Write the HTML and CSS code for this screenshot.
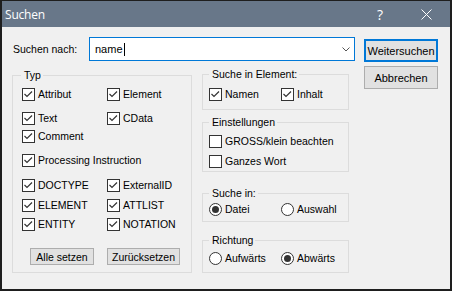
FILE: index.html
```html
<!DOCTYPE html>
<html lang="de">
<head>
    <meta charset="utf-8" />
    <meta name="viewport" content="width=device-width, initial-scale=1" />
    <title>Suchen</title>
    <link rel="stylesheet" href="styles.css">
</head>
<body>
    <svg class="defs" width="0" height="0">
        <symbol id="tick" viewBox="0 0 11 11">
            <path d="M1.5 5 L4 7.5 L9 2.5" fill="none" stroke="#333" stroke-width="1.2" />
        </symbol>
    </svg>
    <div class="window">
        <div class="titlebar">
            <span class="title">Suchen</span>
            <span class="title-btn help">?</span>
            <span class="title-btn close">
                <svg width="11" height="11" viewBox="0 0 11 11">
                    <path d="M0.5 0.5 L10.5 10.5 M10.5 0.5 L0.5 10.5" stroke="#fff" stroke-width="1" />
                </svg>
            </span>
        </div>
        <div class="content">
            <div class="form">
                <div class="search-row">
                    <label class="search-label">Suchen nach:</label>
                    <div class="combo">
                        <span class="combo-text">name</span><span class="caret"></span>
                        <svg class="chevron" width="8" height="5" viewBox="0 0 8 5">
                            <path d="M0.5 0.5 L4 4 L7.5 0.5" fill="none" stroke="#555" stroke-width="1" />
                        </svg>
                    </div>
                </div>
                <div class="groups">
                    <fieldset class="group group-typ">
                        <legend>Typ</legend>
                        <div class="typ-grid">
                            <label class="check"><span class="box"><svg><use href="#tick" /></svg></span>Attribut</label>
                            <label class="check"><span class="box"><svg><use href="#tick" /></svg></span>Element</label>
                            <label class="check"><span class="box"><svg><use href="#tick" /></svg></span>Text</label>
                            <label class="check"><span class="box"><svg><use href="#tick" /></svg></span>CData</label>
                            <label class="check"><span class="box"><svg><use href="#tick" /></svg></span>Comment</label>
                            <span></span>
                            <label class="check wide"><span class="box"><svg><use href="#tick" /></svg></span>Processing Instruction</label>
                            <label class="check"><span class="box"><svg><use href="#tick" /></svg></span>DOCTYPE</label>
                            <label class="check"><span class="box"><svg><use href="#tick" /></svg></span>ExternalID</label>
                            <label class="check"><span class="box"><svg><use href="#tick" /></svg></span>ELEMENT</label>
                            <label class="check"><span class="box"><svg><use href="#tick" /></svg></span>ATTLIST</label>
                            <label class="check"><span class="box"><svg><use href="#tick" /></svg></span>ENTITY</label>
                            <label class="check"><span class="box"><svg><use href="#tick" /></svg></span>NOTATION</label>
                        </div>
                        <div class="typ-buttons">
                            <button class="btn btn-small btn-all">Alle setzen</button>
                            <button class="btn btn-small btn-reset">Zurücksetzen</button>
                        </div>
                    </fieldset>
                    <div class="right-col">
                        <fieldset class="group group-element">
                            <legend>Suche in Element:</legend>
                            <div class="pair">
                                <label class="check"><span class="box"><svg><use href="#tick" /></svg></span>Namen</label>
                                <label class="check"><span class="box"><svg><use href="#tick" /></svg></span>Inhalt</label>
                            </div>
                        </fieldset>
                        <fieldset class="group group-settings">
                            <legend>Einstellungen</legend>
                            <div class="stack">
                                <label class="check"><span class="box"></span>GROSS/klein beachten</label>
                                <label class="check"><span class="box"></span>Ganzes Wort</label>
                            </div>
                        </fieldset>
                        <fieldset class="group group-scope">
                            <legend>Suche in:</legend>
                            <div class="pair">
                                <label class="check"><span class="radio on"></span>Datei</label>
                                <label class="check"><span class="radio"></span>Auswahl</label>
                            </div>
                        </fieldset>
                        <fieldset class="group group-direction">
                            <legend>Richtung</legend>
                            <div class="pair">
                                <label class="check"><span class="radio"></span>Aufwärts</label>
                                <label class="check"><span class="radio on"></span>Abwärts</label>
                            </div>
                        </fieldset>
                    </div>
                </div>
            </div>
            <div class="buttons">
                <button class="btn btn-default">Weitersuchen</button>
                <button class="btn">Abbrechen</button>
            </div>
        </div>
    </div>
</body>
</html>
```

FILE: styles.css
```css
body {
    margin: 0;
    padding: 0;
    font-family: "Liberation Sans", Arial, sans-serif;
    font-size: 10.5px;
    color: #000;
    background-color: #f0f0f0;
}
.defs {
    position: absolute;
}
.window {
    width: 452px;
    height: 291px;
    box-sizing: border-box;
    border: 2px solid #1e1e1e;
    border-top-width: 1px;
    background-color: #f0f0f0;
}
.titlebar {
    display: flex;
    align-items: center;
    height: 26px;
    background-color: #687789;
    color: #fff;
    font-family: "Open Sans", "Noto Sans", sans-serif;
    font-size: 12px;
    letter-spacing: -0.2px;
}
.title {
    flex: 1;
    padding-left: 3px;
}
.title-btn {
    display: flex;
    align-items: center;
    justify-content: center;
    width: 46px;
    height: 26px;
}
.help {
    font-size: 14px;
}
.close {
    margin-right: 1px;
}
.content {
    display: flex;
    padding: 10px 0 0 10px;
}
.form {
    width: 343px;
}
.search-row {
    display: flex;
    align-items: center;
    height: 24px;
}
.search-label {
    width: 76px;
    padding-left: 1px;
}
.combo {
    display: flex;
    align-items: center;
    width: 266px;
    height: 24px;
    box-sizing: border-box;
    border: 1px solid #0078d7;
    background-color: #fff;
    padding-left: 5px;
}
.combo-text {
    font-size: 11px;
}
.caret {
    width: 1px;
    height: 13px;
    margin-left: 1px;
    background-color: #000;
}
.chevron {
    margin-left: auto;
    margin-right: 4px;
}
.groups {
    display: flex;
    gap: 10px;
}
.group {
    margin: 0;
    min-width: 0;
    border: 1px solid #dcdcdc;
    box-sizing: border-box;
}
.group legend {
    padding: 0 2px 0 3px;
    height: 13px;
    line-height: 13px;
}
.group-typ {
    width: 180px;
    margin-top: 8px;
    padding: 6px 0 7px 9px;
}
.group-typ legend {
    margin-left: -1px;
}
.typ-grid {
    display: grid;
    grid-template-columns: 85px 1fr;
    grid-template-rows: 24px 18px 24px 25px 20px 19px 13px;
}
.check {
    display: flex;
    align-items: center;
    gap: 3px;
    height: 13px;
    line-height: 13px;
    white-space: nowrap;
}
.check.wide {
    grid-column: span 2;
}
.box {
    width: 13px;
    height: 13px;
    box-sizing: border-box;
    border: 1px solid #333;
    background-color: #fff;
    flex-shrink: 0;
}
.box svg {
    display: block;
    width: 11px;
    height: 11px;
}
.radio {
    width: 13px;
    height: 13px;
    box-sizing: border-box;
    border: 1px solid #333;
    border-radius: 50%;
    background-color: #fff;
    display: flex;
    align-items: center;
    justify-content: center;
    flex-shrink: 0;
}
.radio.on::after {
    content: "";
    width: 7px;
    height: 7px;
    border-radius: 50%;
    background-color: #333;
}
.typ-buttons {
    display: flex;
    gap: 13px;
    margin-top: 17px;
    padding-left: 8px;
}
.btn {
    font-family: inherit;
    font-size: 10.5px;
    color: #000;
    background-color: #e1e1e1;
    border: 1px solid #adadad;
    border-radius: 0;
    padding: 0;
    margin: 0;
    box-sizing: border-box;
}
.btn-small {
    height: 17px;
}
.btn-all {
    width: 64px;
}
.btn-reset {
    width: 73px;
}
.right-col {
    width: 147px;
    margin-top: 7px;
}
.right-col .group {
    width: 147px;
    padding-left: 6px;
    padding-right: 0;
}
.group-element {
    padding-top: 7px;
    padding-bottom: 8px;
}
.group-settings {
    margin-top: 6px;
    padding-top: 6px;
    padding-bottom: 3px;
}
.group-scope {
    margin-top: 15px;
    padding-top: 3px;
    padding-bottom: 5px;
}
.group-direction {
    margin-top: 12px;
    padding-top: 5px;
    padding-bottom: 7px;
}
.pair {
    display: grid;
    grid-template-columns: 72px 1fr;
}
.stack {
    display: flex;
    flex-direction: column;
    gap: 7px;
}
.buttons {
    display: flex;
    flex-direction: column;
    gap: 4px;
    margin-left: 9px;
    margin-top: 2px;
}
.buttons .btn {
    width: 74px;
    height: 23px;
    font-size: 11px;
}
.btn-default {
    border: 2px solid #0078d7;
}
```
